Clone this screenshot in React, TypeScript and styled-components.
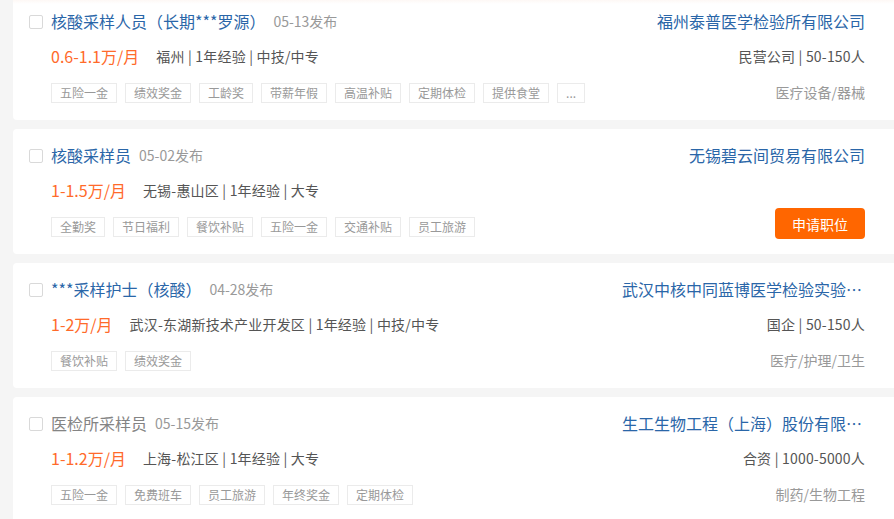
import styled, { createGlobalStyle } from 'styled-components';

const GlobalStyle = createGlobalStyle`
  html, body {
    margin: 0;
    padding: 0;
    background: #f5f5f5;
    overflow: hidden;
  }
  body {
    font-family: 'Noto Sans CJK SC', 'Noto Sans', sans-serif;
  }
`;

type Job = {
  title: string;
  date: string;
  salary: string;
  info: string;
  tags: string[];
  company: string;
  companyInfo?: string;
  industry?: string;
  apply?: boolean;
  visited?: boolean;
  highlight?: boolean;
};

const jobs: Job[] = [
  {
    title: '核酸采样人员（长期***罗源）',
    date: '05-13发布',
    salary: '0.6-1.1万/月',
    info: '福州 | 1年经验 | 中技/中专',
    tags: ['五险一金', '绩效奖金', '工龄奖', '带薪年假', '高温补贴', '定期体检', '提供食堂', '...'],
    company: '福州泰普医学检验所有限公司',
    companyInfo: '民营公司 | 50-150人',
    industry: '医疗设备/器械',
    highlight: true,
  },
  {
    title: '核酸采样员',
    date: '05-02发布',
    salary: '1-1.5万/月',
    info: '无锡-惠山区 | 1年经验 | 大专',
    tags: ['全勤奖', '节日福利', '餐饮补贴', '五险一金', '交通补贴', '员工旅游'],
    company: '无锡碧云间贸易有限公司',
    apply: true,
  },
  {
    title: '***采样护士（核酸）',
    date: '04-28发布',
    salary: '1-2万/月',
    info: '武汉-东湖新技术产业开发区 | 1年经验 | 中技/中专',
    tags: ['餐饮补贴', '绩效奖金'],
    company: '武汉中核中同蓝博医学检验实验室有限公司',
    companyInfo: '国企 | 50-150人',
    industry: '医疗/护理/卫生',
  },
  {
    title: '医检所采样员',
    date: '05-15发布',
    salary: '1-1.2万/月',
    info: '上海-松江区 | 1年经验 | 大专',
    tags: ['五险一金', '免费班车', '员工旅游', '年终奖金', '定期体检'],
    company: '生工生物工程（上海）股份有限公司',
    companyInfo: '合资 | 1000-5000人',
    industry: '制药/生物工程',
    visited: true,
  },
];

const List = styled.div`
  display: flex;
  flex-direction: column;
  gap: 9px;
  padding-left: 13px;
  margin-top: -5px;
`;

const Card = styled.div<{ highlight?: boolean }>`
  display: flex;
  height: 125px;
  box-sizing: border-box;
  padding: 15px 29px 15px 16px;
  border-radius: 4px 0 0 4px;
  background: ${(p) => (p.highlight ? 'linear-gradient(#fcefe8 0, #fff 9px)' : '#fff')};
`;

const Check = styled.span`
  width: 14px;
  height: 14px;
  box-sizing: border-box;
  border: 1px solid #d9d9d9;
  border-radius: 2px;
  margin: 5px 8px 0 0;
  flex-shrink: 0;
`;

const Main = styled.div`
  flex: 1;
  min-width: 0;
  display: flex;
  flex-direction: column;
`;

const TitleRow = styled.div`
  display: flex;
  align-items: center;
  height: 24px;
  margin-top: -1px;
  white-space: nowrap;
`;

const Title = styled.span<{ visited?: boolean }>`
  font-size: 16px;
  color: ${(p) => (p.visited ? '#848484' : '#2a66a8')};
  margin-right: 8px;
`;

const Date = styled.span`
  font-size: 14px;
  color: #999;
`;

const SalaryRow = styled.div`
  display: flex;
  align-items: center;
  height: 24px;
  margin-top: 11px;
  white-space: nowrap;
`;

const Salary = styled.span`
  font-size: 16px;
  color: #ff6a2a;
  margin-right: 17px;
`;

const Info = styled.span`
  font-size: 14px;
  color: #555;
  letter-spacing: 0.2px;
`;

const Tags = styled.div`
  display: flex;
  gap: 8px;
  margin-top: 15px;
`;

const Tag = styled.span`
  height: 20px;
  line-height: 18px;
  box-sizing: border-box;
  padding: 0 8px;
  border: 1px solid #ebebeb;
  font-size: 12px;
  color: #999;
  white-space: nowrap;
`;

const Side = styled.div`
  width: 244px;
  display: flex;
  flex-direction: column;
  align-items: flex-end;
  text-align: right;
`;

const Company = styled.div`
  max-width: 243px;
  height: 24px;
  line-height: 24px;
  margin-top: -1px;
  font-size: 16px;
  color: #2a66a8;
  white-space: nowrap;
  overflow: hidden;
  text-overflow: ellipsis;
`;

const CompanyInfo = styled.div`
  height: 24px;
  line-height: 24px;
  margin-top: 11px;
  font-size: 14px;
  color: #555;
  letter-spacing: 0.2px;
`;

const Industry = styled.div`
  height: 24px;
  line-height: 24px;
  margin-top: 12px;
  font-size: 14px;
  color: #999;
`;

const ApplyButton = styled.button`
  margin-top: auto;
  width: 90px;
  height: 31px;
  border: 0;
  border-radius: 4px;
  background: #ff6600;
  color: #fff;
  font: inherit;
  font-size: 14px;
`;

export default function App() {
  return (
    <>
      <GlobalStyle />
      <List>
        {jobs.map((job) => (
          <Card key={job.title} highlight={job.highlight}>
            <Check />
            <Main>
              <TitleRow>
                <Title visited={job.visited}>{job.title}</Title>
                <Date>{job.date}</Date>
              </TitleRow>
              <SalaryRow>
                <Salary>{job.salary}</Salary>
                <Info>{job.info}</Info>
              </SalaryRow>
              <Tags>
                {job.tags.map((t) => (
                  <Tag key={t}>{t}</Tag>
                ))}
              </Tags>
            </Main>
            <Side>
              <Company>{job.company}</Company>
              {job.companyInfo && <CompanyInfo>{job.companyInfo}</CompanyInfo>}
              {job.industry && <Industry>{job.industry}</Industry>}
              {job.apply && <ApplyButton>申请职位</ApplyButton>}
            </Side>
          </Card>
        ))}
      </List>
    </>
  );
}
